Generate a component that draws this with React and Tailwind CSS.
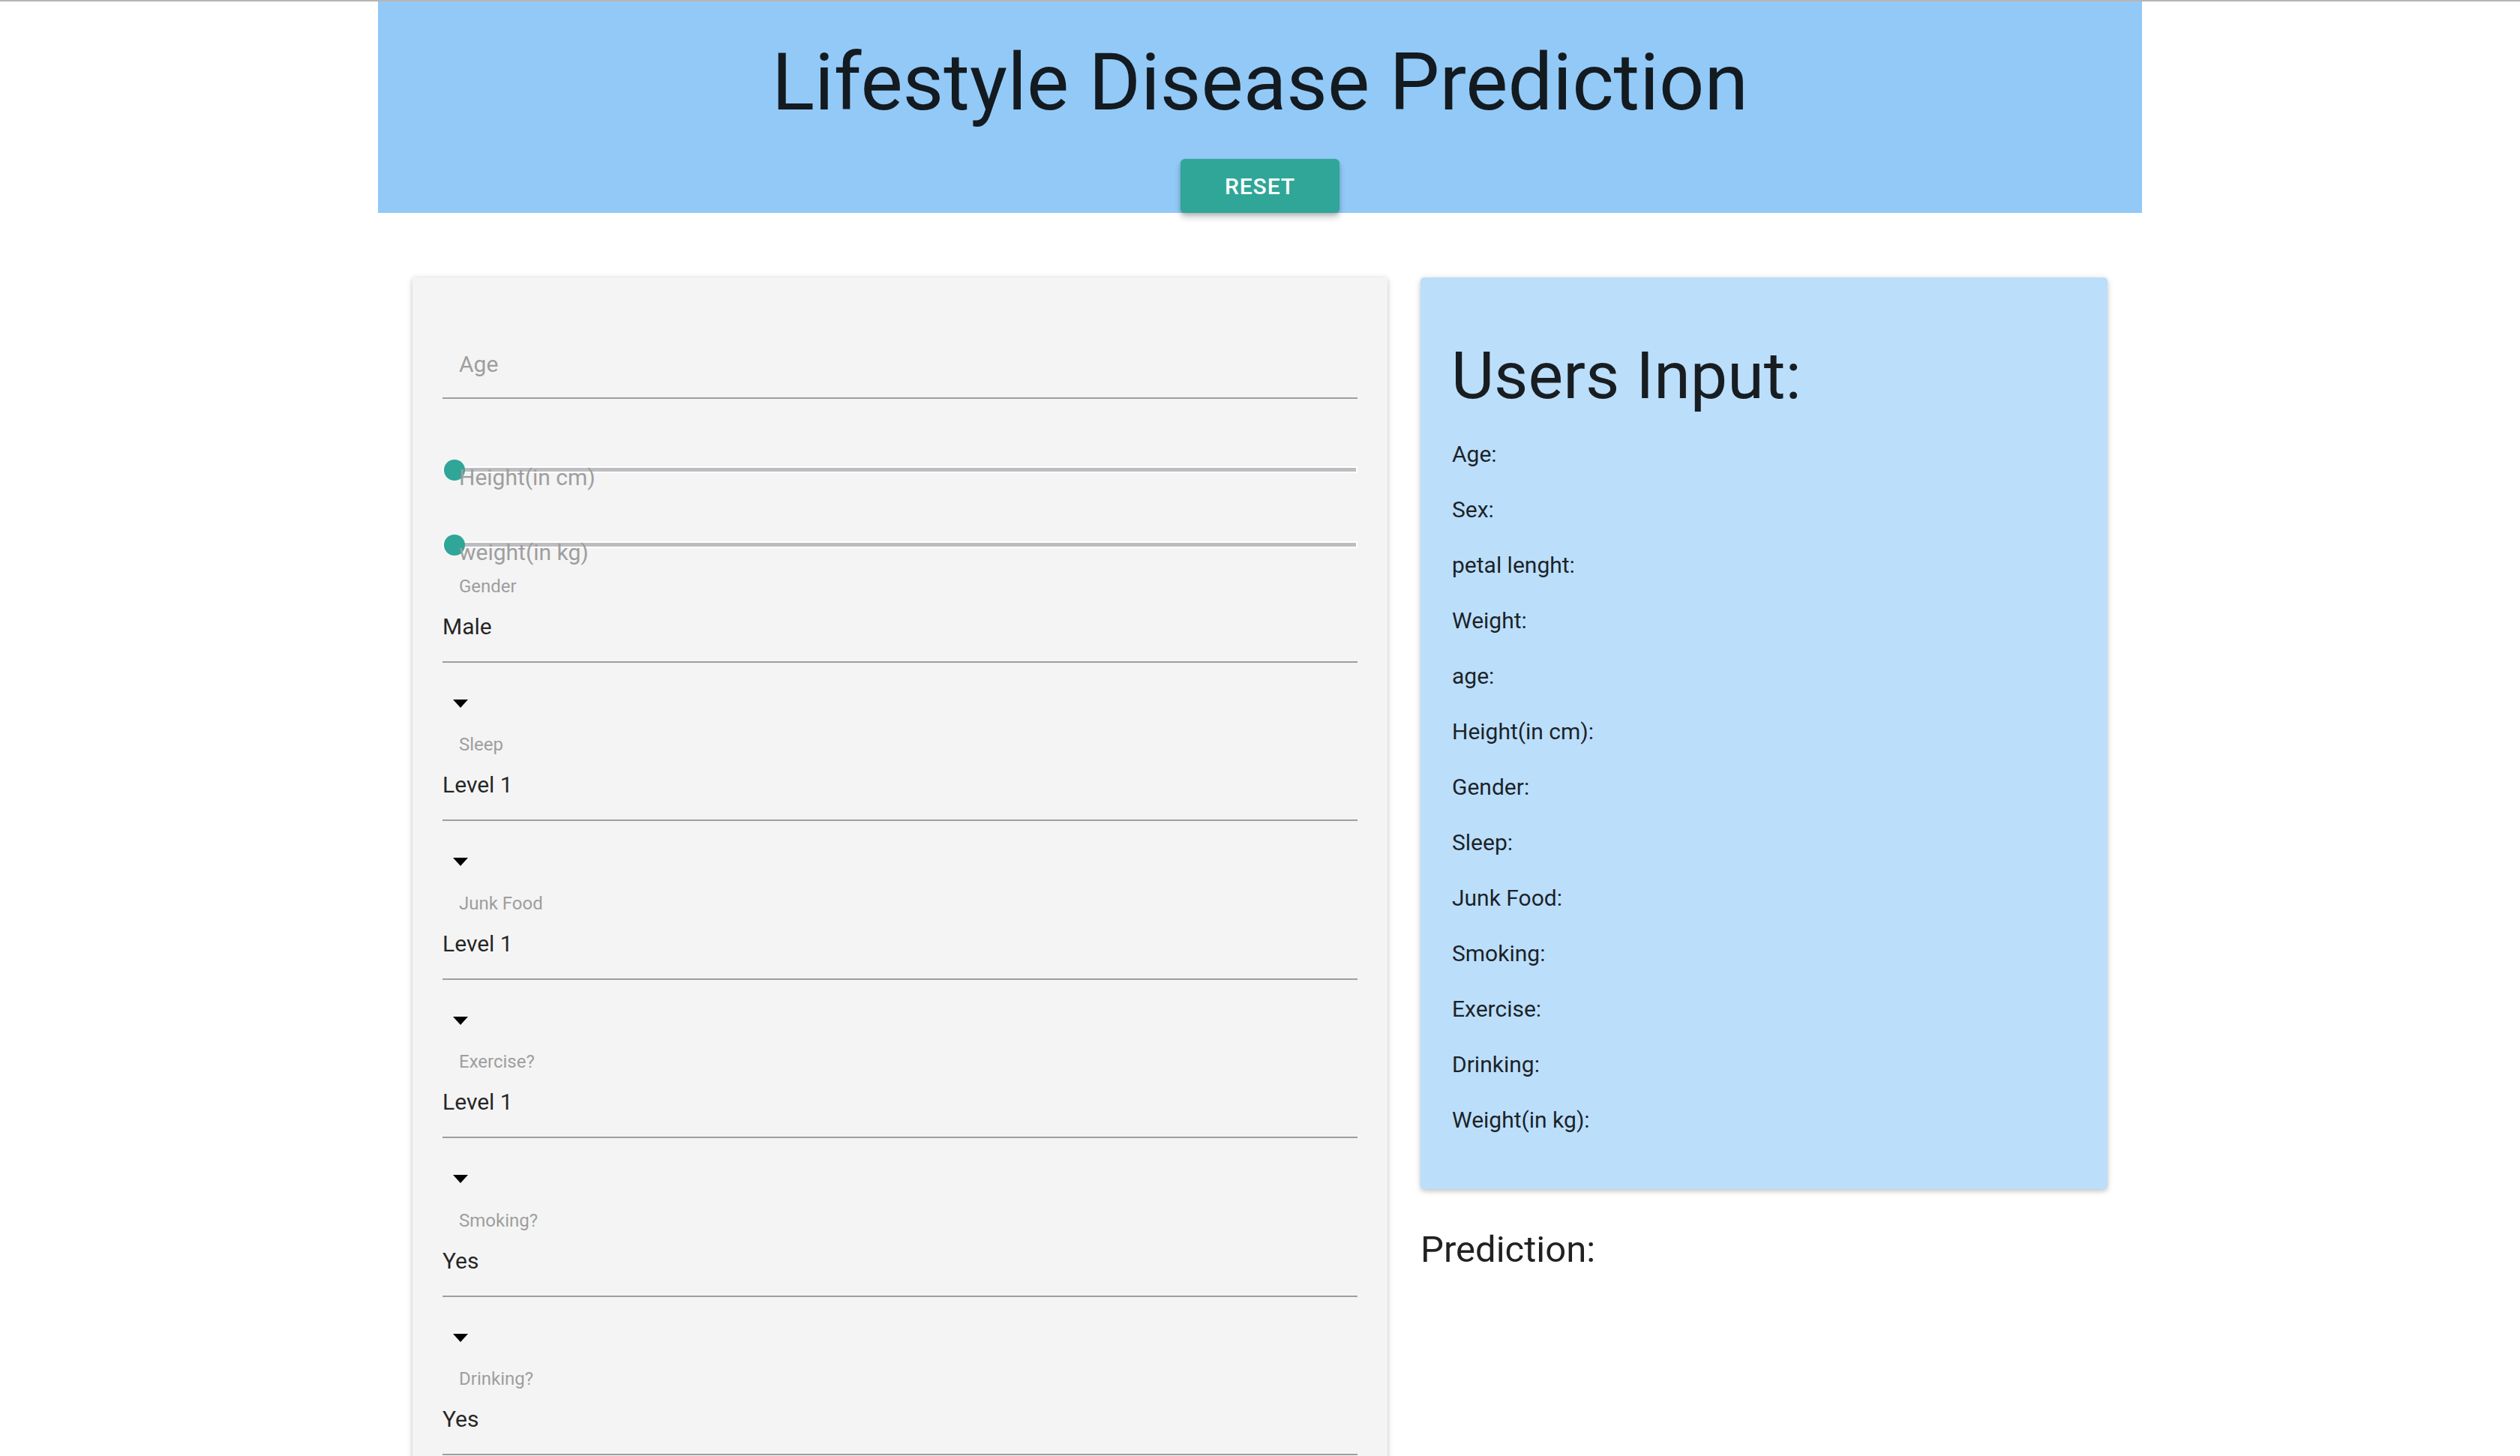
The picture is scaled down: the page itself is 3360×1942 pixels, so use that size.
import React from 'react';

const selects = [
  { label: 'Gender', value: 'Male' },
  { label: 'Sleep', value: 'Level 1' },
  { label: 'Junk Food', value: 'Level 1' },
  { label: 'Exercise?', value: 'Level 1' },
  { label: 'Smoking?', value: 'Yes' },
  { label: 'Drinking?', value: 'Yes' },
];

const summary = [
  'Age', 'Sex', 'petal lenght', 'Weight', 'age', 'Height(in cm)', 'Gender',
  'Sleep', 'Junk Food', 'Smoking', 'Exercise', 'Drinking', 'Weight(in kg)',
];

function SliderRow({ label, className }) {
  return (
    <div className={'relative h-[36px] ' + className}>
      <div className="absolute left-0 right-0 top-[3px] h-[9px] border-2 border-white bg-[#bdbcc0]" />
      <div className="absolute left-[2px] top-[-6px] w-[28px] h-[28px] rounded-full bg-[#2fa698]" />
      <div className="relative pl-[22px] text-[30px] leading-[36px] text-[#9e9e9e]">{label}</div>
    </div>
  );
}

function SelectField({ label, value }) {
  return (
    <div>
      <div className="pl-[22px] text-[24px] leading-[30px] text-[#9e9e9e]">{label}</div>
      <div className="mt-[21px] pb-[28px] border-b-2 border-[#9e9e9e] text-[30px] leading-[36px] text-black/[0.87]">
        {value}
      </div>
      <div className="mt-[49px] mb-[34.5px] ml-[14px] h-[11px]">
        <svg width="20" height="11" viewBox="0 0 20 11" className="block">
          <polygon points="0,0 20,0 10,11" fill="#000" />
        </svg>
      </div>
    </div>
  );
}

export default function App() {
  return (
    <div className="h-screen overflow-hidden bg-white font-['Roboto',sans-serif] text-black/[0.87]">
      <div className="h-[2px] bg-[#b5b5b5]" />

      <header className="mx-auto w-[2352px] bg-[#92c9f7] flex flex-col items-center pt-[54px]">
        <h1 className="text-[106px] leading-[108px] font-normal">Lifestyle Disease Prediction</h1>
        <button className="mt-[48px] w-[212px] h-[72px] rounded-[6px] bg-[#2fa698] text-white text-[30px] font-medium tracking-[0.9px] shadow-[0_6px_8px_rgba(0,0,0,0.2),0_2px_4px_rgba(0,0,0,0.14)]">
          RESET
        </button>
      </header>

      <main className="mx-auto w-[2352px] px-[46px] pt-[86px] flex items-start gap-[44px]">
        <form className="w-[1300px] shrink-0 bg-[#f4f4f4] rounded-[4px] px-[40px] pt-[98px] shadow-[0_2px_6px_rgba(0,0,0,0.18),0_1px_12px_rgba(0,0,0,0.08)]">
          <div className="pb-[26px] border-b-2 border-[#9e9e9e]">
            <div className="pl-[22px] text-[30px] leading-[36px] text-[#9e9e9e]">Age</div>
          </div>

          <SliderRow label="Height(in cm)" className="mt-[87px]" />
          <SliderRow label="weight(in kg)" className="mt-[64px]" />

          <div className="mt-[11.5px]">
            {selects.map((s) => (
              <SelectField key={s.label} label={s.label} value={s.value} />
            ))}
          </div>
        </form>

        <div className="w-[916px] shrink-0">
          <section className="bg-[#bbdefb] rounded-[5px] pl-[42px] pt-[87px] pb-[55px] shadow-[0_3px_6px_rgba(0,0,0,0.18),0_1px_12px_rgba(0,0,0,0.08)]">
            <h2 className="text-[88px] leading-[88px] -ml-[1px]">Users Input:</h2>
            <ul className="mt-[24px]">
              {summary.map((s) => (
                <li key={s} className="text-[30px] leading-[74px]">{s}:</li>
              ))}
            </ul>
          </section>
          <h3 className="mt-[51px] text-[49px] leading-[59px]">Prediction:</h3>
        </div>
      </main>
    </div>
  );
}
